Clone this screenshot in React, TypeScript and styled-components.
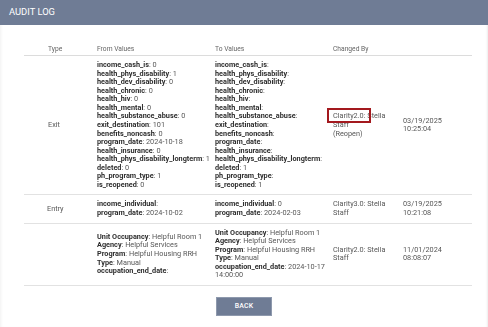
import React from "react";
import styled, { createGlobalStyle } from "styled-components";

const Global = createGlobalStyle`
  html, body { margin: 0; padding: 0; background: #fff; }
  body {
    font-family: Roboto, "Liberation Sans", Arial, sans-serif;
    -webkit-font-smoothing: antialiased;
  }
  * { box-sizing: border-box; }
`;

const Page = styled.div`
  width: 488px;
  height: 327px;
  overflow: hidden;
  box-shadow: inset 3px 0 3px -2px rgba(0,0,0,0.06), inset -2px 0 2px -1px rgba(0,0,0,0.08);
`;

const TitleBar = styled.div`
  height: 25px;
  background: #6f7c95;
  color: #fff;
  font-size: 9.4px;
  display: flex;
  align-items: center;
  padding-left: 9px;
  padding-bottom: 2px;
`;

const Table = styled.div`
  margin: 18px 16px 0 24px;
  display: grid;
  grid-template-columns: 73px 118px 118px 70px 69px;
  will-change: transform;
`;

const HeadCell = styled.div<{ $pl?: number }>`
  font-size: 6.7px;
  color: #666;
  height: 13px;
  display: flex;
  align-items: center;
  padding-left: ${(p) => p.$pl ?? 0}px;
  border-bottom: 1px solid #dcdcdc;
`;

const Cell = styled.div<{ $pl?: number; $pr?: number }>`
  font-size: 7.3px;
  line-height: 8.57px;
  color: #575757;
  padding: 5px ${(p) => p.$pr ?? 3}px 5px ${(p) => p.$pl ?? 0}px;
  border-bottom: 1px solid #e2e2e2;
  display: flex;
  flex-direction: column;
  justify-content: center;
`;

const Line = styled.div`
  display: block;
  white-space: nowrap;
`;

const Key = styled.span`
  font-weight: 700;
  color: #2e2e2e;
`;

const Marked = styled.span`
  position: relative;
  &::after {
    content: "";
    position: absolute;
    left: -6px;
    right: -6px;
    top: -3px;
    bottom: -2.5px;
    border: 2px solid #a3191e;
  }
`;

const Footer = styled.div`
  display: flex;
  justify-content: center;
  margin-top: 11px;
`;

const BackButton = styled.button`
  width: 56px;
  height: 19px;
  background: #6f7c95;
  border: 1px solid #8e99ad;
  color: #fff;
  font-family: inherit;
  font-size: 6.9px;
  font-weight: 500;
  letter-spacing: 0.2px;
  padding: 0;
  cursor: pointer;
`;

type Pair = [string, string];

const exitFrom: Pair[] = [
  ["income_cash_is", "0"],
  ["health_phys_disability", "1"],
  ["health_dev_disability", "0"],
  ["health_chronic", "0"],
  ["health_hiv", "0"],
  ["health_mental", "0"],
  ["health_substance_abuse", "0"],
  ["exit_destination", "101"],
  ["benefits_noncash", "0"],
  ["program_date", "2024-10-18"],
  ["health_insurance", "0"],
  ["health_phys_disability_longterm", "1"],
  ["deleted", "0"],
  ["ph_program_type", "1"],
  ["is_reopened", "0"],
];

const exitTo: Pair[] = [
  ["income_cash_is", ""],
  ["health_phys_disability", ""],
  ["health_dev_disability", ""],
  ["health_chronic", ""],
  ["health_hiv", ""],
  ["health_mental", ""],
  ["health_substance_abuse", ""],
  ["exit_destination", ""],
  ["benefits_noncash", ""],
  ["program_date", ""],
  ["health_insurance", ""],
  ["health_phys_disability_longterm", ""],
  ["deleted", "1"],
  ["ph_program_type", ""],
  ["is_reopened", "1"],
];

const entryFrom: Pair[] = [
  ["income_individual", ""],
  ["program_date", "2024-10-02"],
];
const entryTo: Pair[] = [
  ["income_individual", "0"],
  ["program_date", "2024-02-03"],
];

const unitFrom: Pair[] = [
  ["Unit Occupancy", "Helpful Room 1"],
  ["Agency", "Helpful Services"],
  ["Program", "Helpful Housing RRH"],
  ["Type", "Manual"],
  ["occupation_end_date", ""],
];
const unitTo: Pair[] = [
  ["Unit Occupancy", "Helpful Room 1"],
  ["Agency", "Helpful Services"],
  ["Program", "Helpful Housing RRH"],
  ["Type", "Manual"],
  ["occupation_end_date", "2024-10-17"],
];

const Values = ({ items }: { items: Pair[] }) => (
  <>
    {items.map(([k, v], i) => (
      <Line key={i}>
        <Key>{k}</Key>: {v}
      </Line>
    ))}
  </>
);

export default function App() {
  return (
    <Page>
      <Global />
      <TitleBar>AUDIT LOG</TitleBar>
      <Table>
        <HeadCell $pl={24}>Type</HeadCell>
        <HeadCell>From Values</HeadCell>
        <HeadCell>To Values</HeadCell>
        <HeadCell>Changed By</HeadCell>
        <HeadCell />

        <Cell $pl={24}>Exit</Cell>
        <Cell><Values items={exitFrom} /></Cell>
        <Cell><Values items={exitTo} /></Cell>
        <Cell>
          <Line><Marked>Clarity2.0:</Marked> Stella</Line>
          <Line>Staff</Line>
          <Line>(Reopen)</Line>
        </Cell>
        <Cell>
          <Line>03/19/2025</Line>
          <Line>10:25:04</Line>
        </Cell>

        <Cell $pl={23}>Entry</Cell>
        <Cell><Values items={entryFrom} /></Cell>
        <Cell><Values items={entryTo} /></Cell>
        <Cell>
          <Line>Clarity3.0: Stella</Line>
          <Line>Staff</Line>
        </Cell>
        <Cell>
          <Line>03/19/2025</Line>
          <Line>10:21:08</Line>
        </Cell>

        <Cell />
        <Cell><Values items={unitFrom} /></Cell>
        <Cell>
          <Values items={unitTo} />
          <Line>14:00:00</Line>
        </Cell>
        <Cell>
          <Line>Clarity2.0: Stella</Line>
          <Line>Staff</Line>
        </Cell>
        <Cell>
          <Line>11/01/2024</Line>
          <Line>08:08:07</Line>
        </Cell>
      </Table>
      <Footer>
        <BackButton>BACK</BackButton>
      </Footer>
    </Page>
  );
}
